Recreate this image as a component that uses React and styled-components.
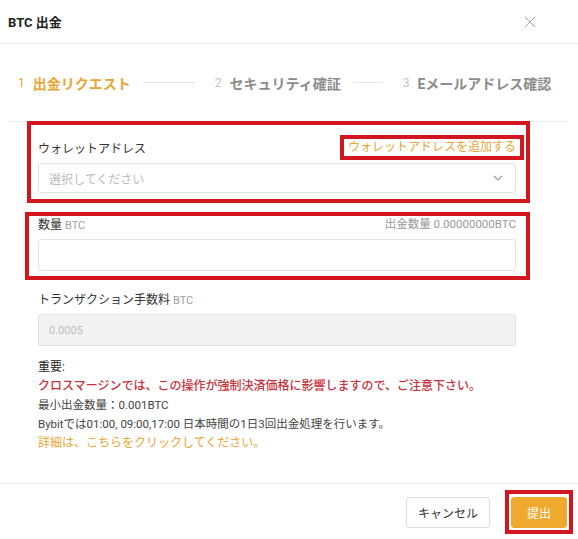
import styled, { createGlobalStyle } from "styled-components";

const ORANGE = "#e8a636";
const MARK = "#d3151e";

function App() {
  return (
    <>
      <GlobalStyle />
      <Modal>
        <Header>
          <Title>BTC 出金</Title>
          <Close aria-label="close">
            <svg width="12" height="12" viewBox="0 0 12 12">
              <path d="M1 1L11 11M11 1L1 11" stroke="#a8a8a8" strokeWidth="1" fill="none" />
            </svg>
          </Close>
        </Header>

        <Steps>
          <Step>
            <StepNum $active>1</StepNum>
            <StepLabel $active>出金リクエスト</StepLabel>
          </Step>
          <StepLine $width={52} />
          <Step>
            <StepNum>2</StepNum>
            <StepLabel>セキュリティ確証</StepLabel>
          </Step>
          <StepLine $width={30} />
          <Step>
            <StepNum>3</StepNum>
            <StepLabel>Eメールアドレス確認</StepLabel>
          </Step>
        </Steps>

        <Body>
          <Form>
            <Field $mark="wallet">
              <LabelRow>
                <Label>ウォレットアドレス</Label>
                <AddLink>ウォレットアドレスを追加する</AddLink>
              </LabelRow>
              <Select>
                <Placeholder>選択してください</Placeholder>
                <svg width="10" height="6" viewBox="0 0 10 6">
                  <path d="M1 1L5 5L9 1" stroke="#9a9a9a" strokeWidth="1.2" fill="none" />
                </svg>
              </Select>
            </Field>

            <Field $mark="amount">
              <LabelRow>
                <Label>
                  数量 <Unit>BTC</Unit>
                </Label>
                <Hint>出金数量 0.00000000BTC</Hint>
              </LabelRow>
              <Input />
            </Field>

            <Field>
              <LabelRow>
                <Label>
                  トランザクション手数料 <Unit>BTC</Unit>
                </Label>
              </LabelRow>
              <Input $disabled>0.0005</Input>
            </Field>

            <Notes>
              <Note>重要:</Note>
              <Note $tone="warn">クロスマージンでは、この操作が強制決済価格に影響しますので、ご注意下さい。</Note>
              <Note $tone="small">最小出金数量：0.001BTC</Note>
              <Note $tone="small">Bybitでは01:00, 09:00,17:00 日本時間の1日3回出金処理を行います。</Note>
              <Note $tone="link">詳細は、こちらをクリックしてください。</Note>
            </Notes>
          </Form>
        </Body>

        <Footer>
          <Button>キャンセル</Button>
          <Button $primary>提出</Button>
        </Footer>
      </Modal>
    </>
  );
}

const GlobalStyle = createGlobalStyle`
  html, body {
    margin: 0;
    padding: 0;
    background: #fff;
  }
  body {
    font-family: "Roboto", "Noto Sans CJK JP", sans-serif;
    color: #333;
  }
`;

const Modal = styled.div`
  display: flex;
  flex-direction: column;
  width: 578px;
  height: 539px;
  background: #fff;
`;

const Header = styled.header`
  display: flex;
  align-items: center;
  justify-content: space-between;
  height: 43px;
  padding: 0 42px 0 8px;
  border-bottom: 1px solid #e6e6e6;
`;

const Title = styled.h1`
  margin: 0;
  font-size: 13px;
  font-weight: 700;
  color: #222;
`;

const Close = styled.span`
  display: flex;
  align-items: center;
`;

const Steps = styled.div`
  display: flex;
  align-items: center;
  height: 77px;
  padding-left: 18px;
`;

const Step = styled.div`
  display: flex;
  align-items: center;
  gap: 8px;
`;

const StepNum = styled.span`
  font-size: 12px;
  color: ${(p) => (p.$active ? ORANGE : "#c4c4c4")};
`;

const StepLabel = styled.span`
  font-size: 14px;
  font-weight: 700;
  color: ${(p) => (p.$active ? ORANGE : "#8c8c8c")};
`;

const StepLine = styled.span`
  width: ${(p) => p.$width}px;
  height: 1px;
  margin: 0 20px 0 12px;
  background: #e2e2e2;
`;

const Body = styled.main`
  flex: 1;
  margin: 0 10px 0 8px;
  border-top: 1px solid #ececec;
`;

const Form = styled.div`
  display: flex;
  flex-direction: column;
  padding: 15px 52px 0 30px;
`;

const Field = styled.div`
  position: relative;
  display: flex;
  flex-direction: column;
  gap: 6px;
  margin-bottom: ${(p) => (p.$mark === "wallet" ? 20 : 17)}px;

  &::after {
    content: "";
    display: ${(p) => (p.$mark ? "block" : "none")};
    position: absolute;
    top: ${(p) => (p.$mark === "wallet" ? -16 : -1)}px;
    left: ${(p) => (p.$mark === "wallet" ? -11 : -13)}px;
    right: -14px;
    bottom: ${(p) => (p.$mark === "wallet" ? -10 : -9)}px;
    border: 4px solid ${MARK};
    pointer-events: none;
  }
`;

const LabelRow = styled.div`
  display: flex;
  align-items: center;
  justify-content: space-between;
  height: 20px;
`;

const Label = styled.span`
  font-size: 12px;
  color: #333;
`;

const Unit = styled.span`
  font-size: 11px;
  color: #a0a0a0;
`;

const Hint = styled.span`
  font-size: 11.5px;
  color: #999;
`;

const AddLink = styled.span`
  position: relative;
  font-size: 12px;
  line-height: 20px;
  color: ${ORANGE};

  &::after {
    content: "";
    position: absolute;
    top: -2px;
    left: -8px;
    right: -8px;
    bottom: -3px;
    border: 4px solid ${MARK};
  }
`;

const Select = styled.div`
  display: flex;
  align-items: center;
  justify-content: space-between;
  height: 30px;
  box-sizing: border-box;
  padding: 0 12px 0 10px;
  border: 1px solid #e3e3e3;
  border-radius: 3px;
`;

const Placeholder = styled.span`
  font-size: 12px;
  color: #bcbcbc;
`;

const Input = styled.div`
  display: flex;
  align-items: center;
  height: 32px;
  box-sizing: border-box;
  padding: 0 10px;
  border: 1px solid #e3e3e3;
  border-radius: 3px;
  font-size: 11px;
  color: #bdbdbd;
  background: ${(p) => (p.$disabled ? "#f2f2f2" : "#fff")};
`;

const Notes = styled.div`
  display: flex;
  flex-direction: column;
  margin-top: -5px;
`;

const Note = styled.div`
  font-size: ${(p) => (p.$tone === "small" ? 11.5 : 12)}px;
  line-height: 19px;
  font-weight: ${(p) => (p.$tone === "warn" ? 500 : 400)};
  color: ${(p) =>
    p.$tone === "warn" ? "#c8323b" : p.$tone === "link" ? ORANGE : p.$tone === "small" ? "#444" : "#222"};
`;

const Footer = styled.footer`
  display: flex;
  align-items: flex-start;
  justify-content: flex-end;
  gap: 21px;
  height: 56px;
  box-sizing: border-box;
  padding: 13px 11px 0 0;
  border-top: 1px solid #e6e6e6;
`;

const Button = styled.button`
  position: relative;
  height: 31px;
  padding: 0 ${(p) => (p.$primary ? 15 : 11)}px;
  border: 1px solid ${(p) => (p.$primary ? "#f0a92f" : "#dedede")};
  border-radius: 3px;
  background: ${(p) => (p.$primary ? "#f0a92f" : "#fff")};
  color: ${(p) => (p.$primary ? "#fff" : "#333")};
  font-family: inherit;
  font-size: 12px;
  cursor: pointer;

  &::after {
    content: "";
    display: ${(p) => (p.$primary ? "block" : "none")};
    position: absolute;
    top: -8px;
    left: -7px;
    right: -7px;
    bottom: -7px;
    border: 4px solid ${MARK};
  }
`;

export default App;
